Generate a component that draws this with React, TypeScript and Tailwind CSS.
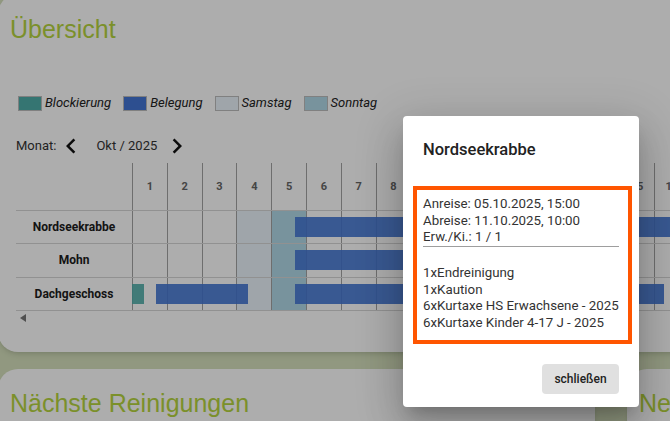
import React from "react";

const DAY_W = 34.8;

const days = Array.from({ length: 16 }, (_, i) => i + 1);

// Okt 2025: 4./11. Samstag, 5./12. Sonntag
const saturdays = [4, 11];
const sundays = [5, 12];

type Bar = { from: number; to: number; kind: "belegung" | "blockierung" };

const rooms: { name: string; bars: Bar[] }[] = [
  {
    name: "Nordseekrabbe",
    bars: [
      { from: 4.67, to: 10.42, kind: "belegung" },
      { from: 10.6, to: 20, kind: "belegung" },
    ],
  },
  { name: "Mohn", bars: [{ from: 4.67, to: 9.4, kind: "belegung" }] },
  {
    name: "Dachgeschoss",
    bars: [
      { from: 0, to: 0.34, kind: "blockierung" },
      { from: 0.68, to: 3.32, kind: "belegung" },
      { from: 4.67, to: 15.28, kind: "belegung" },
    ],
  },
];

function ChevronLeft() {
  return (
    <svg width="30" height="30" viewBox="0 0 24 24" className="shrink-0">
      <path d="M15.41 7.41L14 6l-6 6 6 6 1.41-1.41L10.83 12z" fill="#111" />
    </svg>
  );
}

function ChevronRight() {
  return (
    <svg width="30" height="30" viewBox="0 0 24 24" className="shrink-0">
      <path d="M10 6L8.59 7.41 13.17 12l-4.58 4.59L10 18l6-6z" fill="#111" />
    </svg>
  );
}

function Legend() {
  const items = [
    { label: "Blockierung", color: "bg-[#4fada9]" },
    { label: "Belegung", color: "bg-[#4375d4]" },
    { label: "Samstag", color: "bg-[#ebf3fb]" },
    { label: "Sonntag", color: "bg-[#b2d9e8]" },
  ];
  return (
    <div className="ml-[8px] mt-[51px] flex h-[16px] items-center gap-[12px]">
      {items.map((it) => (
        <div key={it.label} className="flex items-center gap-[3px]">
          <div className={`h-[15px] w-[24px] border border-[#bdbdbd] ${it.color}`} />
          <span className="text-[13px] italic text-[#222]">{it.label}</span>
        </div>
      ))}
    </div>
  );
}

function Calendar() {
  return (
    <div className="ml-[6px] mt-[5px]">
      <div className="flex h-[47px]">
        <div className="w-[116px] shrink-0" />
        {days.map((d) => (
          <div
            key={d}
            className="flex w-[34.8px] shrink-0 items-center justify-center border-l border-[#a2a2a2] pt-[1px] text-[11px] font-bold text-[#666]"
          >
            {d}
          </div>
        ))}
      </div>
      {rooms.map((room) => (
        <div key={room.name} className="flex h-[33.3px] border-t border-[#d6d6d6]">
          <div className="flex w-[116px] shrink-0 items-center justify-center text-[12px] font-bold text-[#1c1c1c]">
            {room.name}
          </div>
          <div className="relative flex">
            {days.map((d) => (
              <div
                key={d}
                className={`w-[34.8px] shrink-0 border-l border-[#a2a2a2] ${
                  saturdays.includes(d) ? "bg-[#ebf3fb]" : sundays.includes(d) ? "bg-[#b2d9e8]" : ""
                }`}
              />
            ))}
            {room.bars.map((b, i) => (
              <div
                key={i}
                className={`absolute top-[6px] h-[20px] opacity-90 ${
                  b.kind === "belegung" ? "bg-[#4375d4]" : "bg-[#4fada9]"
                }`}
                style={{ left: b.from * DAY_W, width: (b.to - b.from) * DAY_W }}
              />
            ))}
          </div>
        </div>
      ))}
      <div className="flex h-[16px] items-center border-t border-[#d6d6d6] pl-[4px]">
        <div className="h-0 w-0 border-y-[4px] border-r-[6px] border-y-transparent border-r-[#777]" />
      </div>
    </div>
  );
}

function Uebersicht() {
  return (
    <div className="-ml-[2px] -mt-[6px] w-[700px] rounded-[20px] bg-white pb-[26px] pl-[12px] pt-[20px] shadow-md">
      <h1 className="font-['Liberation_Sans',Arial,sans-serif] text-[25px] leading-[30px] text-[#b5d43e]">
        Übersicht
      </h1>
      <Legend />
      <div className="ml-[6px] mt-[23px] flex h-[24px] items-center text-[13px] text-[#333]">
        <span>Monat:</span>
        <ChevronLeft />
        <span className="ml-[10px] mr-[5px]">Okt / 2025</span>
        <ChevronRight />
      </div>
      <Calendar />
    </div>
  );
}

function Dialog() {
  return (
    <div className="absolute left-[403px] top-[116px] w-[236px] rounded-[4px] bg-white pb-[13px] shadow-[0_11px_15px_-7px_rgba(0,0,0,0.2),0_24px_38px_3px_rgba(0,0,0,0.14),0_9px_46px_8px_rgba(0,0,0,0.12)]">
      <h2 className="pl-[20px] pt-[22px] text-[16.5px] font-medium leading-[24px] text-[#222]">
        Nordseekrabbe
      </h2>
      <div className="ml-[10px] mt-[24px] w-[219px] whitespace-nowrap border-[4px] border-[#ff5500] pb-[9px] pl-[6px] pr-[9px] pt-[6px] text-[13.3px] leading-[16.5px] text-[#333]">
        <div>Anreise: 05.10.2025, 15:00</div>
        <div>Abreise: 11.10.2025, 10:00</div>
        <div className="border-b border-[#9e9e9e]">Erw./Ki.: 1 / 1</div>
        <div className="mt-[18.5px]">
          <div>1xEndreinigung</div>
          <div>1xKaution</div>
          <div>6xKurtaxe HS Erwachsene - 2025</div>
          <div>6xKurtaxe Kinder 4-17 J - 2025</div>
        </div>
      </div>
      <div className="mt-[20px] flex justify-end pr-[20px]">
        <button className="h-[30px] w-[77px] rounded-[4px] bg-[#e0e0e0] text-[12px] font-medium text-[#222]">
          schließen
        </button>
      </div>
    </div>
  );
}

export default function App() {
  return (
    <div className="relative h-[421px] w-[670px] overflow-hidden bg-[#d6e1bd] font-['Roboto',sans-serif]">
      <Uebersicht />
      <div className="mt-[17px] flex">
        <div className="-ml-[2px] h-[120px] w-[597px] shrink-0 rounded-[20px] bg-white pl-[12px] pt-[19px] shadow-md">
          <h2 className="font-['Liberation_Sans',Arial,sans-serif] text-[25px] leading-[30px] text-[#b5d43e]">
            Nächste Reinigungen
          </h2>
        </div>
        <div className="ml-[32px] h-[120px] w-[300px] shrink-0 rounded-[20px] bg-white pl-[12px] pt-[19px] shadow-md">
          <h2 className="whitespace-nowrap font-['Liberation_Sans',Arial,sans-serif] text-[25px] leading-[30px] text-[#b5d43e]">
            Neue Buchungen
          </h2>
        </div>
      </div>
      <div className="absolute inset-0 bg-black/[0.32]" />
      <Dialog />
    </div>
  );
}
